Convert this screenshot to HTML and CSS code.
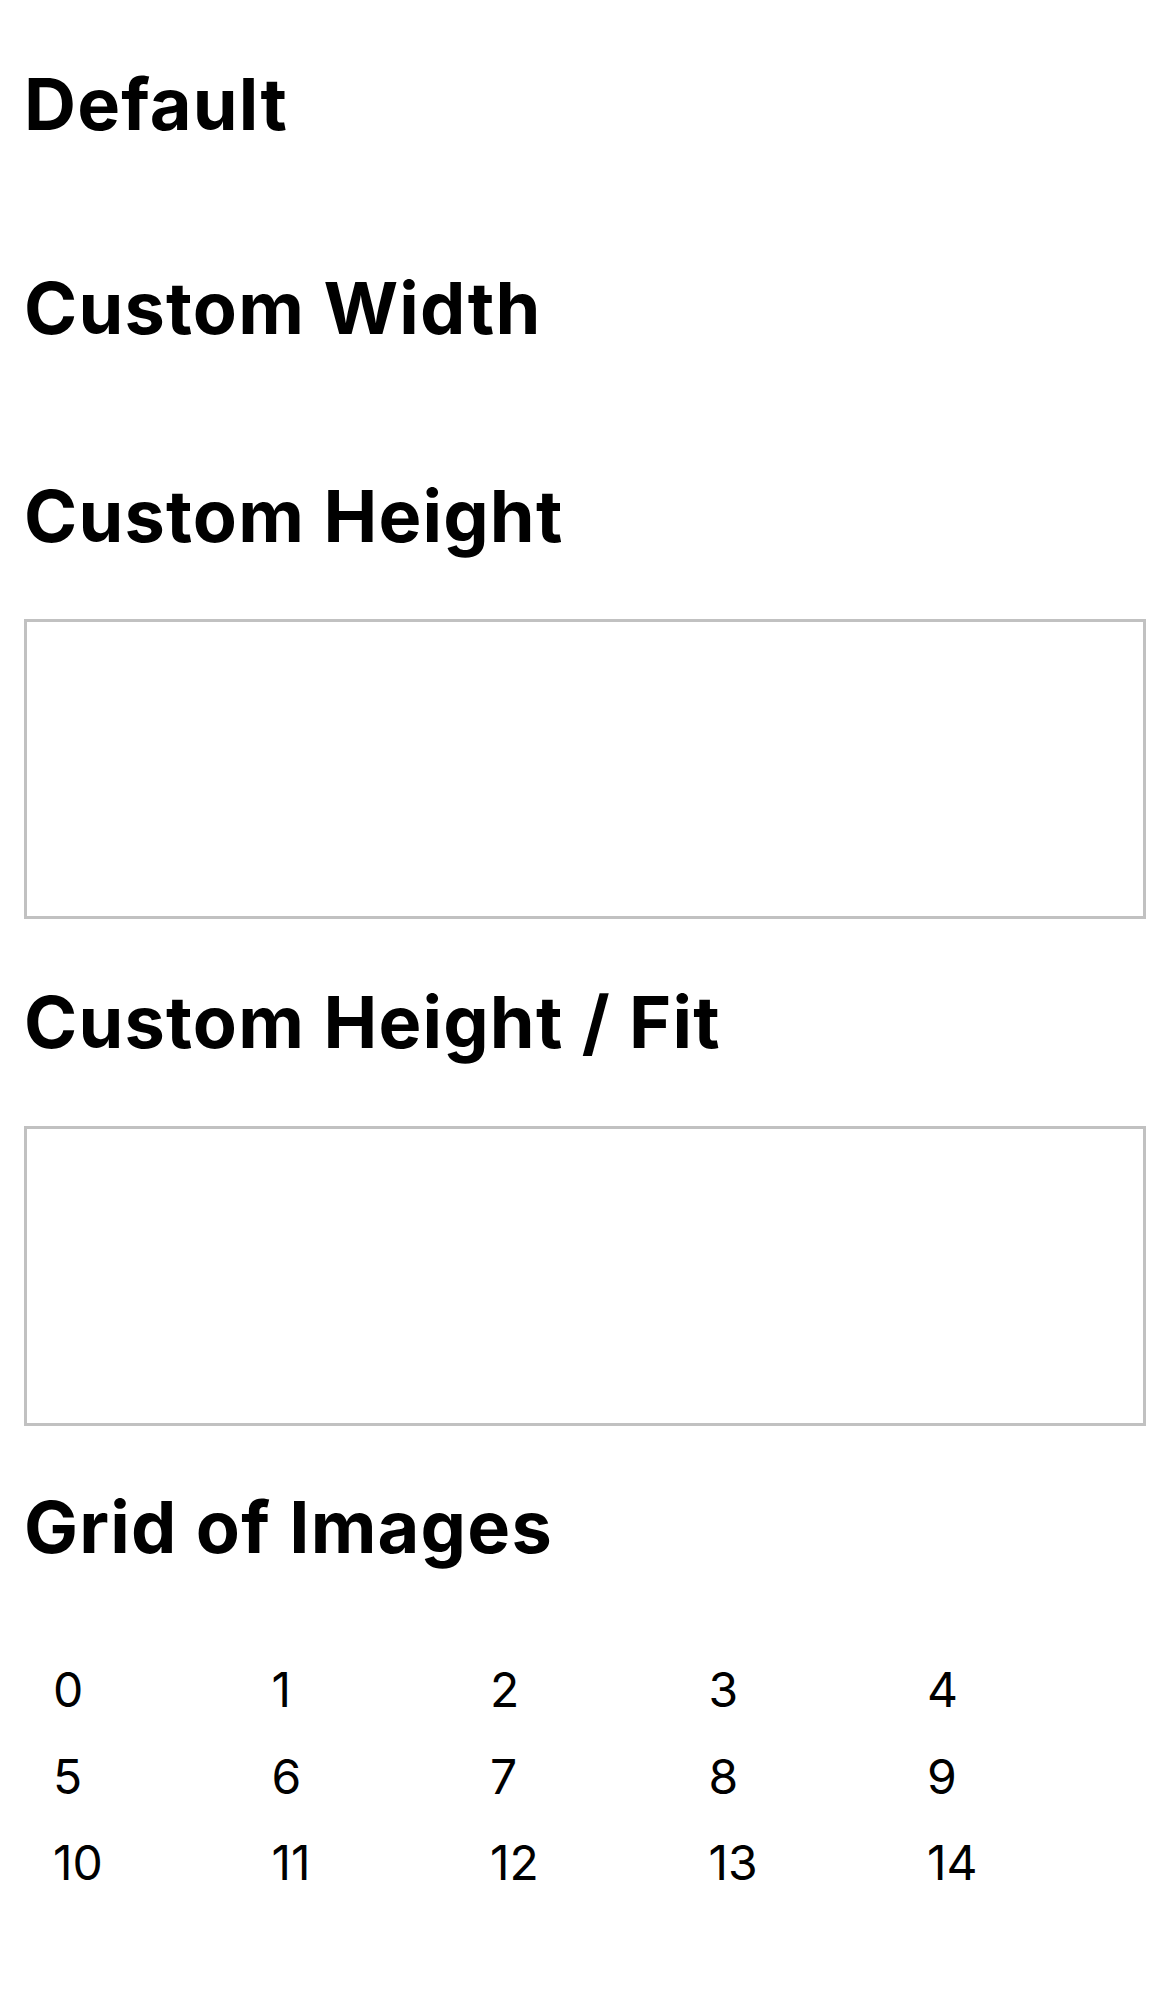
FILE: index.html
```html
<!DOCTYPE html>
<html lang="en">
<head>
<meta charset="utf-8">
<title>Images</title>
<link rel="stylesheet" href="styles.css">
</head>
<body>
<main class="page">
  <h2 class="title title-first">Default</h2>
  <h2 class="title title-w">Custom Width</h2>
  <h2 class="title title-h">Custom Height</h2>
  <div class="frame frame-1"></div>
  <h2 class="title title-fit">Custom Height / Fit</h2>
  <div class="frame frame-2"></div>
  <h2 class="title title-grid">Grid of Images</h2>
  <div class="grid">
    <div class="cell">0</div><div class="cell">1</div><div class="cell">2</div><div class="cell">3</div><div class="cell">4</div>
    <div class="cell">5</div><div class="cell">6</div><div class="cell">7</div><div class="cell">8</div><div class="cell">9</div>
    <div class="cell">10</div><div class="cell">11</div><div class="cell">12</div><div class="cell">13</div><div class="cell">14</div>
  </div>
</main>
</body>
</html>
```
FILE: styles.css
```css
html, body {
  margin: 0;
  padding: 0;
  background: #ffffff;
}
body {
  font-family: Inter, "Noto Sans", "Liberation Sans", sans-serif;
  color: #000000;
}
.page {
  padding: 66px 24px 0 24px;
}
.title {
  margin: 0;
  font-size: 72px;
  line-height: 76px;
  font-weight: 700;
  letter-spacing: 1.2px;
}
.title-w { margin-top: 128px; }
.title-h { margin-top: 132px; }
.title-fit { margin-top: 65px; }
.title-grid { margin-top: 63px; }
.frame {
  box-sizing: border-box;
  height: 300px;
  border: 3px solid #c1c1c1;
}
.frame-1 { margin-top: 65px; }
.frame-2 { margin-top: 66px; }
.grid {
  margin-top: 82px;
  padding-left: 29px;
  display: grid;
  grid-template-columns: repeat(5, 218.5px);
  grid-auto-rows: 86.5px;
}
.cell {
  font-size: 48px;
  line-height: 86.5px;
  font-weight: 400;
}
```
